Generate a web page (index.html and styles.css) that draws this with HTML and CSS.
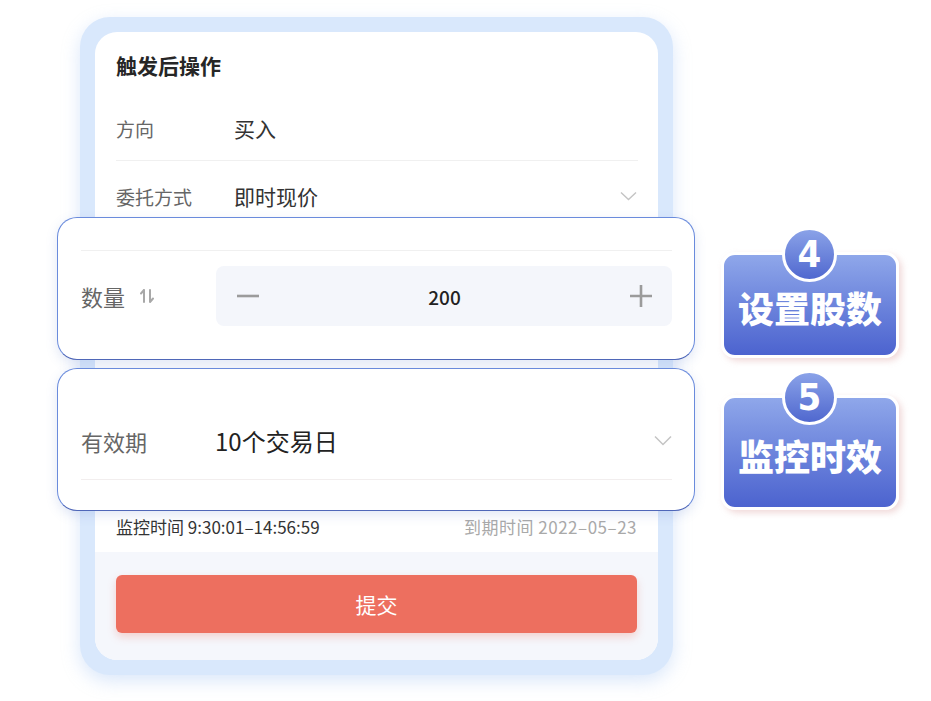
FILE: index.html
```html
<!DOCTYPE html>
<html lang="zh-CN">
<head>
<meta charset="utf-8">
<title>触发后操作</title>
<link rel="stylesheet" href="styles.css">
</head>
<body>
<div class="page">
  <div class="frame">
    <div class="card">
      <div class="title">触发后操作</div>
      <div class="row row-dir">
        <span class="label">方向</span>
        <span class="value">买入</span>
      </div>
      <div class="row row-type">
        <span class="label">委托方式</span>
        <span class="value">即时现价</span>
        <svg class="chev" width="17" height="10" viewBox="0 0 17 10"><path d="M1 1.5 L8.5 8.5 L16 1.5" fill="none" stroke="#c4c4c4" stroke-width="1.4"/></svg>
      </div>
      <div class="spacer"></div>
      <div class="info">
        <span class="info-left">监控时间 9:30:01–14:56:59</span>
        <span class="info-right">到期时间 2022–05–23</span>
      </div>
      <div class="footer">
        <div class="submit">提交</div>
      </div>
    </div>

    <div class="overlay ov-qty">
      <div class="ov-top"></div>
      <div class="ov-row">
        <div class="ov-label">数量
          <svg class="sort" width="16" height="16" viewBox="0 0 16 16"><path d="M5 2 V14 M5 2 L2 5.5 M11 2 V14 L14 10.5" fill="none" stroke="#a8a8a8" stroke-width="2" stroke-linecap="round" stroke-linejoin="round"/></svg>
        </div>
        <div class="stepper">
          <svg width="22" height="22" viewBox="0 0 22 22"><path d="M0 11 H22" stroke="#9b9b9b" stroke-width="2.6"/></svg>
          <span class="num">200</span>
          <svg width="22" height="22" viewBox="0 0 22 22"><path d="M0 11 H22 M11 0 V22" stroke="#9b9b9b" stroke-width="2.6"/></svg>
        </div>
      </div>
    </div>

    <div class="overlay ov-exp">
      <div class="ov-row2">
        <div class="ov-label">有效期</div>
        <div class="ov-value">10个交易日</div>
        <svg class="chev2" width="18" height="11" viewBox="0 0 18 11"><path d="M1 1.5 L9 9.5 L17 1.5" fill="none" stroke="#c4c4c4" stroke-width="1.5"/></svg>
      </div>
    </div>
  </div>

  <div class="badges">
    <div class="badge b1">
      <div class="bnum">4</div>
      <span class="btext">设置股数</span>
    </div>
    <div class="badge b2">
      <div class="bnum">5</div>
      <span class="btext">监控时效</span>
    </div>
  </div>
</div>
</body>
</html>
```

FILE: styles.css
```css
* { box-sizing: border-box; }
html, body {
  margin: 0;
  padding: 0;
  background: #ffffff;
  font-family: "Noto Sans CJK SC", "Noto Sans", sans-serif;
}
.page {
  width: 931px;
  height: 701px;
  display: flex;
  align-items: flex-start;
  overflow: hidden;
}
.frame {
  position: relative;
  margin: 17px 0 0 80px;
  width: 593px;
  height: 658px;
  padding: 15px;
  background: #d9e8fc;
  border-radius: 30px;
  box-shadow: 0 6px 18px rgba(150, 185, 240, 0.35);
}
.card {
  width: 563px;
  height: 628px;
  background: #ffffff;
  border-radius: 22px;
  overflow: hidden;
  display: flex;
  flex-direction: column;
}
.title {
  padding: 19px 20px 0 21px;
  height: 64px;
  font-size: 21px;
  line-height: 28px;
  font-weight: 700;
  color: #262626;
}
.row {
  margin: 0 20px 0 21px;
  display: flex;
  align-items: center;
}
.row-dir {
  height: 65px;
  border-bottom: 1px solid #f0f0f0;
}
.row-type {
  height: 70px;
}
.label {
  width: 118px;
  font-size: 19px;
  color: #666;
}
.value {
  font-size: 21px;
  color: #333;
}
.chev { margin-left: auto; margin-right: 1px; }
.spacer { height: 269px; }
.info {
  height: 52px;
  padding: 0 21px 0 21px;
  display: flex;
  align-items: center;
  justify-content: space-between;
  font-size: 17px;
}
.info-left { color: #333; }
.info-right { color: #a9a9a9; letter-spacing: 0.5px; }
.footer {
  flex: 1;
  background: #f5f7fc;
  padding: 23px 21px 0 21px;
}
.submit {
  height: 58px;
  border-radius: 6px;
  background: #ed6f5f;
  box-shadow: 0 4px 8px rgba(237, 111, 95, 0.28);
  color: #fff;
  font-size: 21px;
  display: flex;
  align-items: center;
  justify-content: center;
}

.overlay {
  position: absolute;
  left: -23px;
  width: 638px;
  height: 143px;
  background: #ffffff;
  border: 1.5px solid #6a8bdc;
  border-bottom-color: #4f67b8;
  border-radius: 20px;
  box-shadow: 0 4px 12px rgba(90, 120, 200, 0.18);
  padding: 0 22px 0 23px;
}
.ov-qty { top: 200px; }
.ov-exp { top: 351px; }
.ov-top {
  height: 33px;
  border-bottom: 1px solid #f0f0f0;
}
.ov-row {
  margin-top: 15px;
  display: flex;
  align-items: center;
}
.ov-label {
  width: 135px;
  font-size: 22px;
  color: #666;
  display: flex;
  align-items: center;
  flex-shrink: 0;
}
.sort { margin-left: 14px; }
.stepper {
  flex: 1;
  height: 60px;
  background: #f4f6fb;
  border-radius: 8px;
  display: flex;
  align-items: center;
  justify-content: space-between;
  padding: 0 20px 0 21px;
}
.num {
  font-size: 19px;
  font-weight: 500;
  color: #222;
}
.ov-row2 {
  height: 111px;
  padding-top: 33px;
  border-bottom: 1px solid #f2eeee;
  display: flex;
  align-items: center;
}
.ov-row2 .ov-label { width: 134px; }
.ov-value {
  font-size: 24px;
  color: #222;
}
.chev2 { margin-left: auto; margin-right: 0; }

.badges {
  margin: 252px 0 0 48px;
  display: flex;
  flex-direction: column;
  gap: 37px;
}
.badge {
  position: relative;
  width: 178px;
  border: 3px solid #ffffff;
  border-radius: 14px;
  background: linear-gradient(180deg, #8fa7ea 0%, #6c84dc 50%, #4c63cf 100%);
  box-shadow: 3px 3px 6px rgba(215, 150, 150, 0.35);
  display: flex;
  align-items: center;
  justify-content: center;
  padding-top: 4px;
}
.b1 { height: 106px; }
.b2 { height: 115px; }
.btext {
  font-size: 36px;
  font-weight: 900;
  color: #ffffff;
  letter-spacing: 0;
  line-height: 1;
}
.bnum {
  position: absolute;
  top: -28px;
  left: 58px;
  width: 55px;
  height: 55px;
  border-radius: 50%;
  border: 3px solid #ffffff;
  background: linear-gradient(180deg, #8aa2e8 0%, #5068cf 100%);
  color: #fff;
  font-family: "Liberation Sans Narrow", "DejaVu Sans Condensed", "Liberation Sans", sans-serif;
  font-weight: 700;
  font-size: 38px;
  line-height: 49px;
  text-align: center;
}
```
